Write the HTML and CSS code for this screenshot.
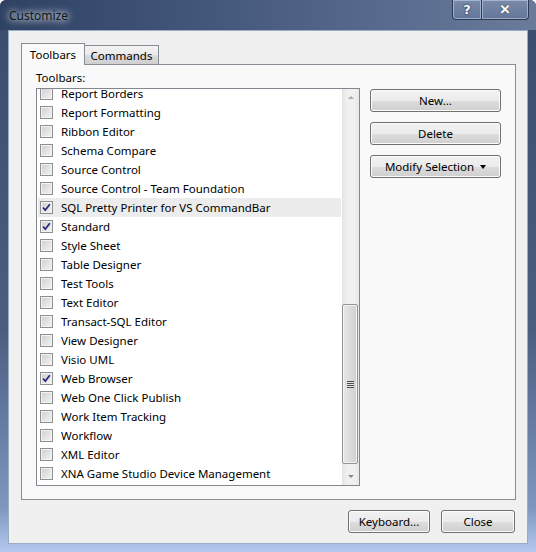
FILE: index.html
```html
<!DOCTYPE html>
<html lang="en">
<head>
    <meta charset="UTF-8">
    <title>Customize</title>
    <link rel="stylesheet" href="styles.css">
</head>
<body>
    <div class="window">
        <div class="titlebar">
            <span class="title">Customize</span>
            <div class="caption-btns">
                <div class="cap help">?</div>
                <div class="cap close">&#x2715;</div>
            </div>
        </div>

        <div class="client">
            <div class="tabs">
                <div class="tab active">Toolbars</div>
                <div class="tab">Commands</div>
            </div>

            <div class="panel">
                <div class="label">Toolbars:</div>
                <div class="panel-body">
                    <div class="listbox">
                        <div class="items">
                            <div class="row"><span class="cb"></span>Report Borders</div>
                            <div class="row"><span class="cb"></span>Report Formatting</div>
                            <div class="row"><span class="cb"></span>Ribbon Editor</div>
                            <div class="row"><span class="cb"></span>Schema Compare</div>
                            <div class="row"><span class="cb"></span>Source Control</div>
                            <div class="row"><span class="cb"></span>Source Control - Team Foundation</div>
                            <div class="row hover"><span class="cb checked"><svg viewBox="0 0 11 11" width="11" height="11"><path d="M2 5.5 L4.3 8 L8.8 2.2" /></svg></span>SQL Pretty Printer for VS CommandBar</div>
                            <div class="row"><span class="cb checked"><svg viewBox="0 0 11 11" width="11" height="11"><path d="M2 5.5 L4.3 8 L8.8 2.2" /></svg></span>Standard</div>
                            <div class="row"><span class="cb"></span>Style Sheet</div>
                            <div class="row"><span class="cb"></span>Table Designer</div>
                            <div class="row"><span class="cb"></span>Test Tools</div>
                            <div class="row"><span class="cb"></span>Text Editor</div>
                            <div class="row"><span class="cb"></span>Transact-SQL Editor</div>
                            <div class="row"><span class="cb"></span>View Designer</div>
                            <div class="row"><span class="cb"></span>Visio UML</div>
                            <div class="row"><span class="cb checked"><svg viewBox="0 0 11 11" width="11" height="11"><path d="M2 5.5 L4.3 8 L8.8 2.2" /></svg></span>Web Browser</div>
                            <div class="row"><span class="cb"></span>Web One Click Publish</div>
                            <div class="row"><span class="cb"></span>Work Item Tracking</div>
                            <div class="row"><span class="cb"></span>Workflow</div>
                            <div class="row"><span class="cb"></span>XML Editor</div>
                            <div class="row"><span class="cb"></span>XNA Game Studio Device Management</div>
                        </div>
                        <div class="scrollbar">
                            <div class="arrow up"></div>
                            <div class="track">
                                <div class="thumb"><span class="grip"></span></div>
                            </div>
                            <div class="arrow down"></div>
                        </div>
                    </div>

                    <div class="side-btns">
                        <button class="btn">New...</button>
                        <button class="btn">Delete</button>
                        <button class="btn">Modify Selection <span class="caret"></span></button>
                    </div>
                </div>
            </div>

            <div class="footer">
                <button class="btn keyboard">Keyboard...</button>
                <button class="btn close-btn">Close</button>
            </div>
        </div>
    </div>
</body>
</html>
```

FILE: styles.css
```css
body {
    margin: 0;
    font-family: "Noto Sans", "Liberation Sans", sans-serif;
    font-size: 11.5px;
    color: #000;
}
.window {
    width: 536px;
    height: 552px;
    box-sizing: border-box;
    padding: 0 8px 8px 8px;
    background: linear-gradient(to bottom, #3a4c6c 0%, #4a5e80 60%, #7f97bf 92%, #b4c9ee 100%);
    border-radius: 6px 6px 0 0;
    display: flex;
    flex-direction: column;
    overflow: hidden;
}
.titlebar {
    height: 30px;
    display: flex;
    justify-content: space-between;
    background: linear-gradient(to right, #2f4264, #44587c 40%, #5a6d90 75%, #6a7b9a);
    margin: 0 -8px;
    padding: 0 7px 0 9px;
}
.title {
    padding-top: 7px;
    font-size: 12px;
    color: #101820;
    text-shadow: 0 0 6px #fff, 0 0 10px rgba(255,255,255,0.8);
}
.caption-btns {
    display: flex;
    height: 20px;
}
.cap {
    height: 19px;
    border: 1px solid #2c3a52;
    border-top: none;
    box-shadow: inset 0 0 0 1px rgba(210,222,245,0.5);
    background: linear-gradient(to bottom, #7a8ba8, #63769a);
    color: #fff;
    font-family: "DejaVu Sans", sans-serif;
    font-weight: bold;
    font-size: 13px;
    text-align: center;
    line-height: 19px;
    text-shadow: 0 0 2px #1c2740, 0 0 1px #1c2740;
}
.help {
    width: 28px;
    border-radius: 0 0 0 4px;
}
.close {
    width: 46px;
    border-left: none;
    border-radius: 0 0 4px 0;
    font-size: 13px;
    -webkit-text-stroke: 0.6px #fff;
}
.client {
    flex: 1;
    background: #f0f0f0;
    border: 1px solid #9aabc5;
    padding: 12px 11px 0 12px;
    display: flex;
    flex-direction: column;
}
.tabs {
    display: flex;
    align-items: flex-end;
    height: 21px;
}
.tab {
    border: 1px solid #898c95;
    border-bottom: none;
    width: 75px;
    box-sizing: border-box;
    text-align: center;
    height: 19px;
    line-height: 19px;
    background: linear-gradient(to bottom, #f2f2f2, #ebebeb 50%, #dddddd 51%, #cfcfcf);
    margin-left: -1px;
}
.tab.active {
    width: 64px;
    background: #f9f9f9;
    margin-left: 0;
    margin-bottom: -1px;
    height: 22px;
    line-height: 22px;
    position: relative;
    z-index: 1;
}
.panel {
    height: 436px;
    box-sizing: border-box;
    border: 1px solid #898c95;
    background: #f9f9f9;
    padding: 0 14px 0 14px;
}
.label {
    height: 23px;
    padding-top: 3px;
    box-sizing: border-box;
    line-height: 20px;
}
.panel-body {
    display: flex;
    gap: 10px;
}
.listbox {
    width: 324px;
    height: 398px;
    box-sizing: border-box;
    border: 1px solid #828790;
    background: #fff;
    display: flex;
    overflow: hidden;
}
.items {
    flex: 1;
    margin-top: -5px;
    padding: 0 1px;
}
.row {
    height: 19px;
    display: flex;
    align-items: center;
    padding-left: 2px;
    white-space: nowrap;
}
.row.hover {
    background: #ececec;
}
.cb {
    width: 13px;
    height: 13px;
    box-sizing: border-box;
    border: 1px solid #8e8f8f;
    background: linear-gradient(135deg, #cfcfcf, #f4f4f4);
    box-shadow: inset 0 0 0 1px #f3f3f3;
    margin-right: 8px;
    display: flex;
    align-items: center;
    justify-content: center;
    flex-shrink: 0;
}
.cb svg path {
    fill: none;
    stroke: #2a2c7c;
    stroke-width: 1.8;
}
.scrollbar {
    width: 17px;
    background: linear-gradient(to right, #e4e4e4, #f0f0f0 30%, #f0f0f0 70%, #e8e8e8);
    display: flex;
    flex-direction: column;
}
.arrow {
    height: 17px;
    display: flex;
    justify-content: center;
    align-items: center;
}
.arrow::after {
    content: "";
    border-left: 3px solid transparent;
    border-right: 3px solid transparent;
}
.arrow.up::after {
    border-bottom: 3px solid #a8a8a8;
}
.arrow.down::after {
    border-top: 3px solid #8a8a8a;
}
.track {
    flex: 1;
    display: flex;
    flex-direction: column;
    justify-content: flex-end;
}
.thumb {
    height: 160px;
    margin: 0 1px 4px 0;
    box-sizing: border-box;
    border: 1px solid #959595;
    border-radius: 2px;
    box-shadow: inset 0 0 0 1px #f3f3f3;
    background: linear-gradient(to right, #e8e8e8, #dcdcdc 50%, #cfcfcf);
    display: flex;
    align-items: center;
    justify-content: center;
}
.grip {
    width: 7px;
    height: 7px;
    background: repeating-linear-gradient(to bottom, #4c4c4c 0, #4c4c4c 1px, #e6e6e6 1px, #e6e6e6 2px);
}
.side-btns {
    display: flex;
    flex-direction: column;
    gap: 10px;
    padding-top: 1px;
}
.btn {
    font-family: inherit;
    font-size: 11.5px;
    color: #000;
    height: 23px;
    border: 1px solid #707070;
    border-radius: 3px;
    background: linear-gradient(to bottom, #f2f2f2, #ebebeb 50%, #dddddd 51%, #cfcfcf);
    box-shadow: inset 0 0 0 1px #fcfcfc;
    padding: 0;
}
.side-btns .btn {
    width: 131px;
}
.caret {
    display: inline-block;
    margin-left: 3px;
    border-left: 3.5px solid transparent;
    border-right: 3.5px solid transparent;
    border-top: 4px solid #000;
    vertical-align: 2px;
}
.footer {
    display: flex;
    justify-content: flex-end;
    gap: 11px;
    padding: 10px 1px 0 0;
}
.keyboard {
    width: 82px;
}
.close-btn {
    width: 74px;
}
```
